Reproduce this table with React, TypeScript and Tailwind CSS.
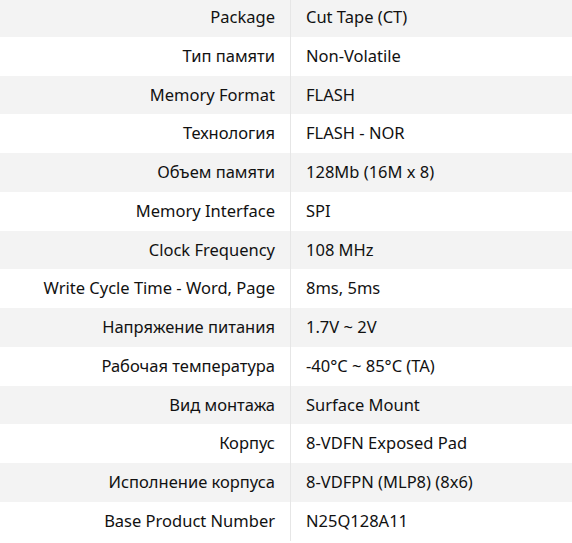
import React from 'react';

const rows: [string, string][] = [
    ['Package', 'Cut Tape (CT)'],
    ['Тип памяти', 'Non-Volatile'],
    ['Memory Format', 'FLASH'],
    ['Технология', 'FLASH - NOR'],
    ['Объем памяти', '128Mb (16M x 8)'],
    ['Memory Interface', 'SPI'],
    ['Clock Frequency', '108 MHz'],
    ['Write Cycle Time - Word, Page', '8ms, 5ms'],
    ['Напряжение питания', '1.7V ~ 2V'],
    ['Рабочая температура', '-40°C ~ 85°C (TA)'],
    ['Вид монтажа', 'Surface Mount'],
    ['Корпус', '8-VDFN Exposed Pad'],
    ['Исполнение корпуса', '8-VDFPN (MLP8) (8x6)'],
    ['Base Product Number', 'N25Q128A11'],
];

const App: React.FC = () => {
    return (
        <div className="w-[572px] h-[543px] overflow-hidden bg-white font-['Noto_Sans',sans-serif] text-[16.5px] text-[#111]">
            <div className="-mt-[2px]">
                {rows.map(([label, value], i) => (
                    <div
                        key={label}
                        className={`flex h-[38.75px] items-center ${i % 2 === 0 ? 'bg-[#f3f3f3]' : 'bg-white'}`}
                    >
                        <div className="w-[291px] h-full flex items-center justify-end pr-[15px] border-r border-[#e6e6e6]">
                            {label}
                        </div>
                        <div className="flex-1 pl-[15px]">{value}</div>
                    </div>
                ))}
            </div>
        </div>
    );
};

export default App;
